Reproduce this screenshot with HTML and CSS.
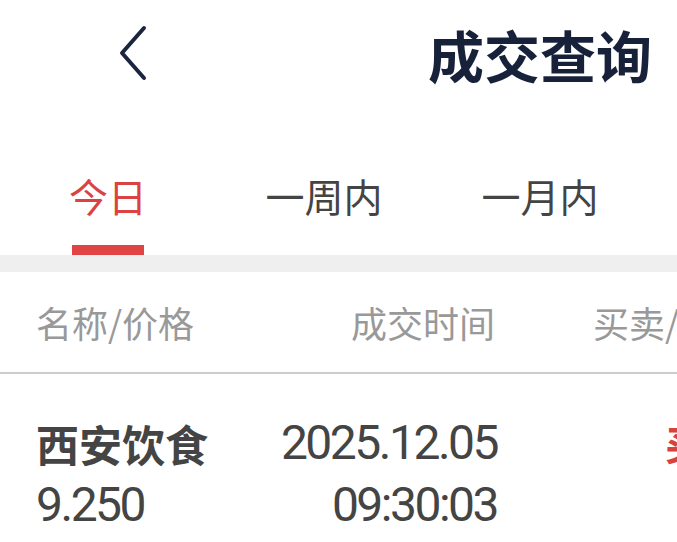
FILE: index.html
```html
<!DOCTYPE html>
<html>

<head>
    <meta charset="UTF-8">
    <meta name="viewport" content="width=device-width, initial-scale=1.0">
    <link rel="stylesheet" href="styles.css">
    <title>成交查询</title>
</head>

<body>
    <div id="screen">
        <div class="topbar">
            <a class="back" href="#">
                <svg width="32" height="56" viewBox="0 0 32 56">
                    <polyline points="26,3 4,28 26,53" fill="none" stroke="#1c2540" stroke-width="4"
                        stroke-linecap="round" stroke-linejoin="round" />
                </svg>
            </a>
            <h1 class="title">成交查询</h1>
        </div>

        <div class="tabs">
            <div class="tab active"><span>今日</span></div>
            <div class="tab"><span>一周内</span></div>
            <div class="tab"><span>一月内</span></div>
        </div>

        <div class="band"></div>

        <div class="thead">
            <span class="c1">名称/价格</span>
            <span class="c2">成交时间</span>
            <span class="c3">买卖/状态</span>
        </div>

        <div class="row">
            <div class="c1">
                <div class="name">西安饮食</div>
                <div class="num">9.250</div>
            </div>
            <div class="c2">
                <div class="num">2025.12.05</div>
                <div class="num">09:30:03</div>
            </div>
            <div class="c3">
                <div class="buy">买入</div>
            </div>
        </div>
    </div>
</body>

</html>
```

FILE: styles.css
```css
html,
body {
    margin: 0;
    padding: 0;
    overflow: hidden;
    background: #fff;
}

#screen {
    width: 1080px;
    font-family: "Noto Sans CJK SC", sans-serif;
    white-space: nowrap;
}

.topbar {
    display: flex;
    align-items: center;
    height: 112px;
}

.back {
    display: flex;
    margin-left: 118px;
    margin-top: -7px;
}

.title {
    margin: -5px 0 0 278px;
    font-size: 56px;
    font-weight: 700;
    line-height: 112px;
    color: #17213a;
}

.tabs {
    display: flex;
    height: 143px;
}

.tab {
    width: 216px;
    padding-top: 56px;
    text-align: center;
    font-size: 39px;
    line-height: 54px;
    color: #444;
}

.tab.active {
    color: #d94343;
    position: relative;
}

.tab.active::after {
    content: "";
    position: absolute;
    left: 72px;
    width: 72px;
    bottom: 0;
    height: 10px;
    background: #e04444;
}

.band {
    height: 17px;
    background: #efefef;
}

.thead {
    display: flex;
    align-items: center;
    height: 100px;
    border-bottom: 2px solid #cccccc;
    padding-left: 36px;
    font-size: 36px;
    color: #999;
}

.c1 {
    width: 200px;
}

.c2 {
    width: 259px;
    text-align: right;
}

.c3 {
    padding-left: 98px;
}

.row {
    display: flex;
    padding: 38px 0 0 36px;
    color: #444;
}

.name {
    font-size: 43px;
    font-weight: 700;
    line-height: 62px;
}

.num {
    font-family: Roboto, sans-serif;
    font-size: 48px;
    letter-spacing: -2.5px;
    line-height: 62px;
}

.row .c2 .num {
    margin-right: -2px;
}

.row .c3 {
    padding-left: 170px;
}

.buy {
    font-size: 40px;
    font-weight: 700;
    line-height: 62px;
    color: #d9413f;
}
```
